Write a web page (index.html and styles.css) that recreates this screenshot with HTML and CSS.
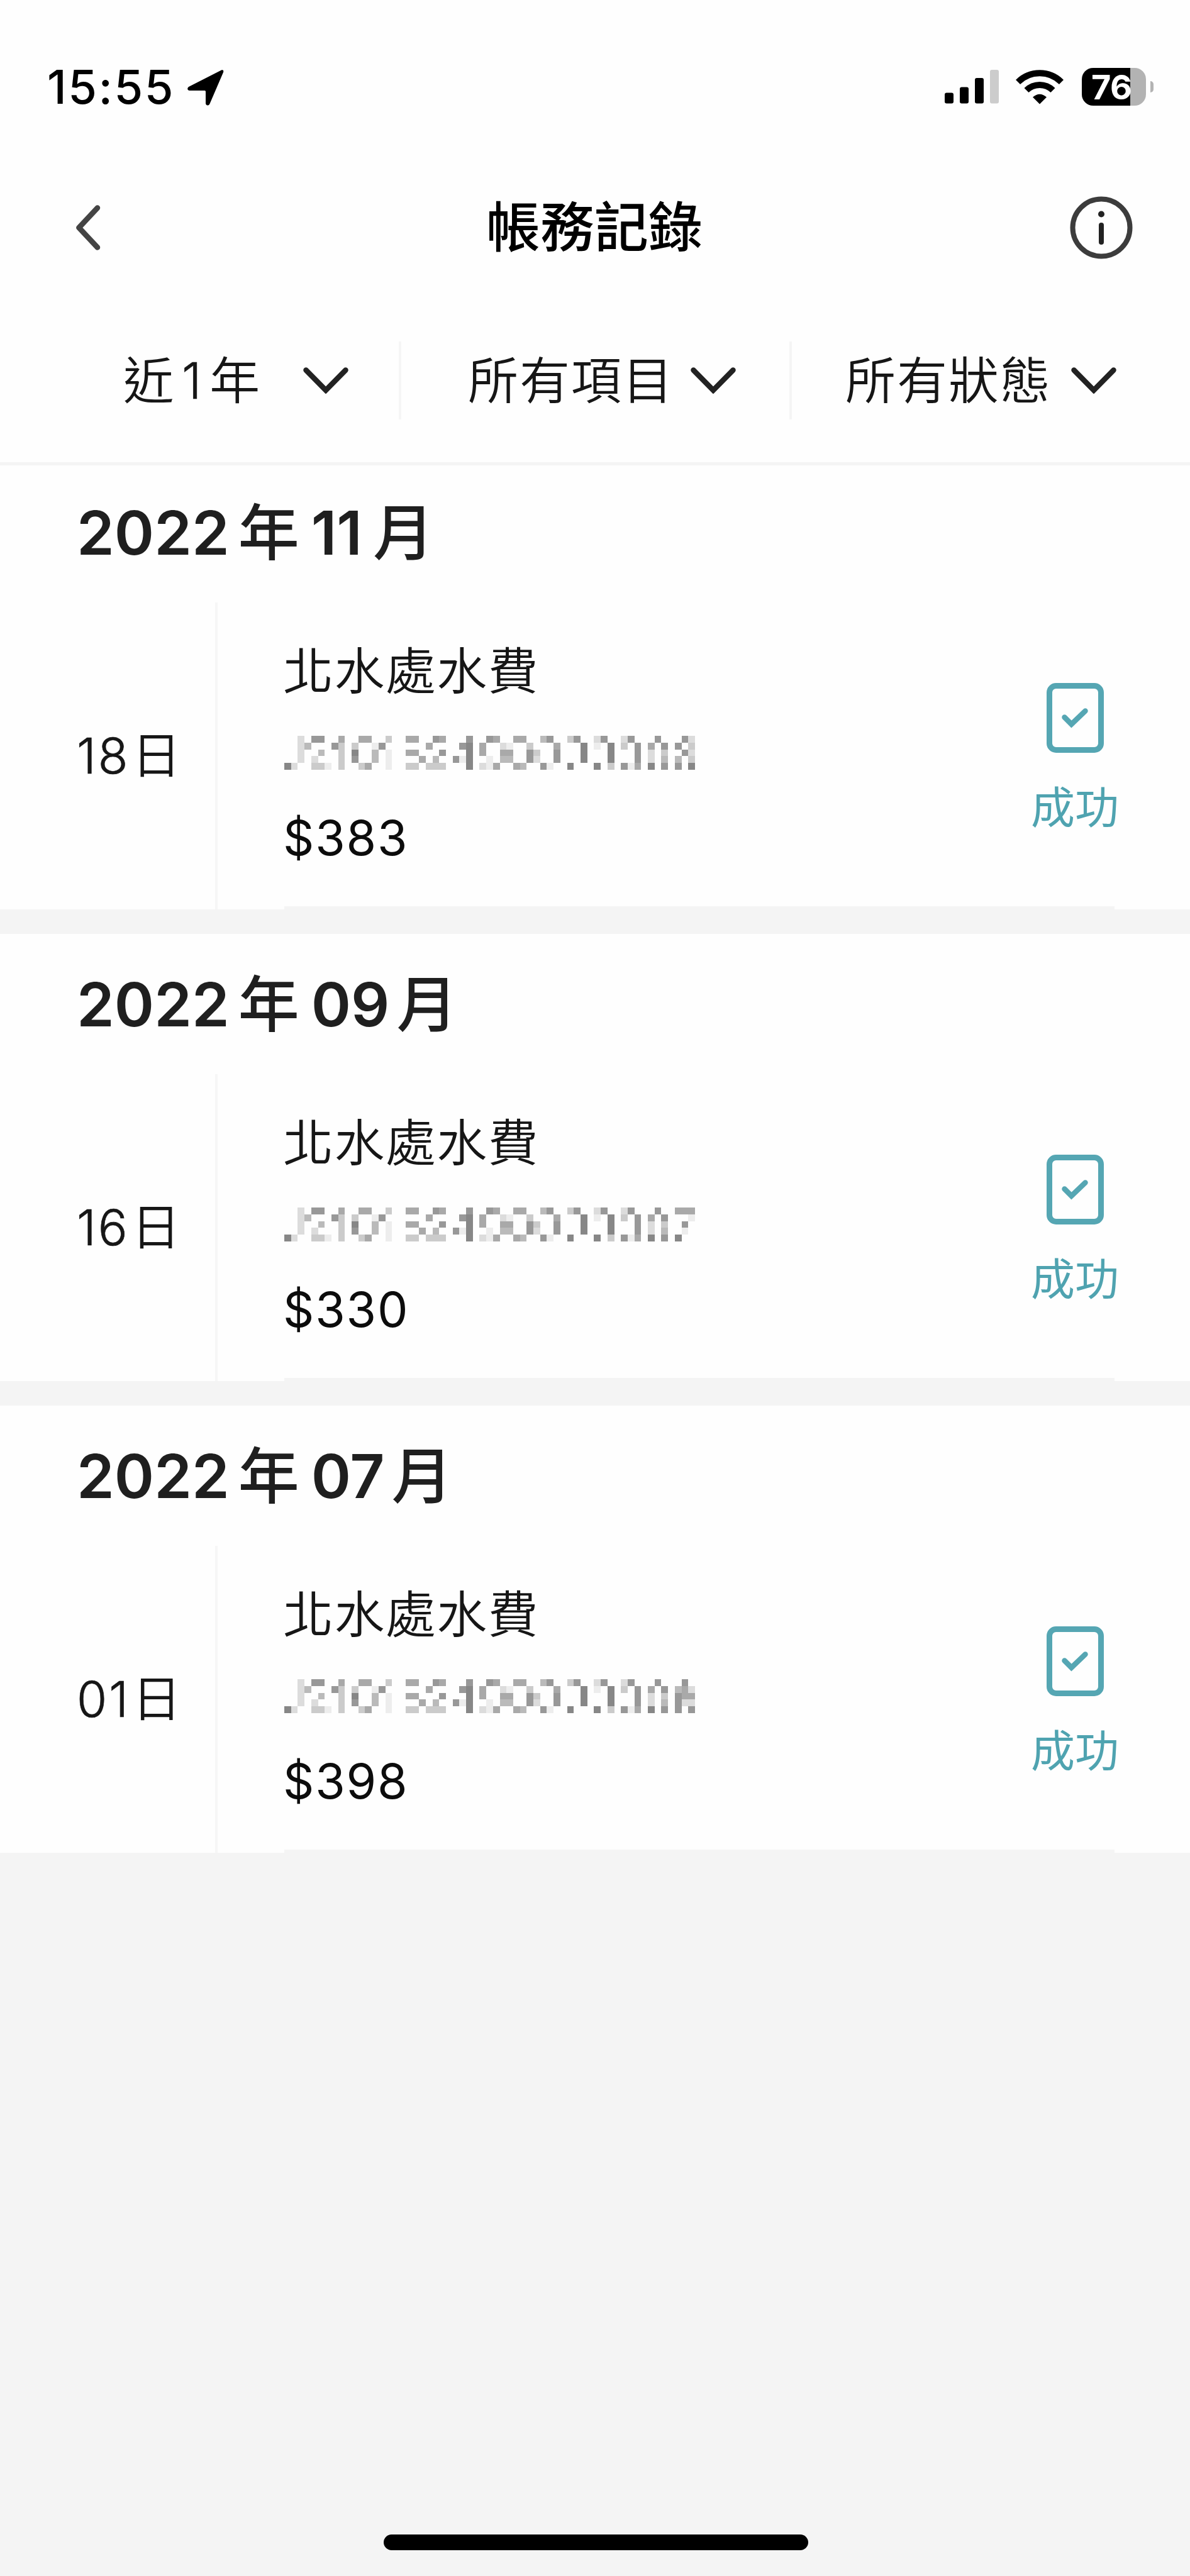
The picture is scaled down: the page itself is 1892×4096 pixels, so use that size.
FILE: index.html
```html
<!DOCTYPE html>
<html lang="zh-Hant">
<head>
<meta charset="utf-8">
<title>帳務記錄</title>
<link rel="stylesheet" href="styles.css">
</head>
<body>
<svg class="defs" aria-hidden="true">
  <symbol id="chevron-down" viewBox="0 0 72 42"><path d="M4.500 4.500 36 36.500 67.500 4.500" fill="none" stroke="#222" stroke-width="8.500" stroke-linecap="round"/></symbol>
  <symbol id="receipt-ok" viewBox="0 0 91 111">
    <rect x="4.500" y="4.500" width="82" height="102" rx="10.500" fill="none" stroke="#55a6b3" stroke-width="9"/>
    <path d="M28.500 54.500 39.500 65.500 61.500 44.500" fill="none" stroke="#55a6b3" stroke-width="8.500" stroke-linecap="round"/>
  </symbol>
</svg>
<div class="screen">
  <header class="top">
    <div class="status-bar">
      <div class="clock">
        <span class="time">15:55</span>
        <svg class="locate" viewBox="0 0 58 58"><path d="M54 1.500 3 27.500C-1.500 30 0 34 3.500 34H27.500Q29 34 29 35.500V54C29 58 33.500 59 35.500 55L57 5C58 2 56.500.500 54 1.500Z"/></svg>
      </div>
      <div class="indicators">
        <svg class="signal" viewBox="0 0 86 54"><rect y="36.500" width="14" height="17" rx="3"/><rect x="24" y="27.500" width="14" height="26" rx="3"/><rect x="48" y="13" width="14" height="40.500" rx="3"/><rect x="72" width="14" height="53.500" rx="3" fill="#ccc"/></svg>
        <svg class="wifi" viewBox="0 0 76 56"><g fill="none" stroke="#000" stroke-width="10"><path d="M3.500 20.500A49 49 0 0 1 72.500 20.500"/><path d="M17 33.500A30 30 0 0 1 59 33.500"/></g><path d="M38 55.500 27 44.500Q38 35 49 44.500Z"/></svg>
        <div class="battery"><span class="level">76</span></div>
        <i class="nub"></i>
      </div>
    </div>
    <nav class="nav">
      <svg class="back" viewBox="0 0 40 72"><path d="M35 4.500 5.500 36 35 67.500" fill="none" stroke="#444" stroke-width="8.500" stroke-linecap="round" stroke-linejoin="round"/></svg>
      <h1 class="title">帳務記錄</h1>
      <svg class="info" viewBox="0 0 100 100"><circle cx="50" cy="50" r="45.500" fill="none" stroke="#3c3c3c" stroke-width="8"/><circle cx="50" cy="28.500" r="5" fill="#222"/><path d="M50 46V73" stroke="#222" stroke-width="8" stroke-linecap="round"/></svg>
    </nav>
    <div class="filters">
      <div class="filter filter-range"><span>近<b>1</b>年</span><svg class="chev"><use href="#chevron-down"/></svg></div>
      <div class="filter filter-item"><span>所有項目</span><svg class="chev"><use href="#chevron-down"/></svg></div>
      <div class="filter filter-state"><span>所有狀態</span><svg class="chev"><use href="#chevron-down"/></svg></div>
    </div>
  </header>
  <main class="list">
    <section class="card">
      <h2 class="month ones">2022<span class="year">年</span>11<span class="mon">月</span></h2>
      <div class="entry">
        <div class="day">18<span>日</span></div>
        <div class="detail"><div class="name">北水處水費</div><svg class="masked" viewBox="0 0 61 5" preserveAspectRatio="none" data-tail="8"></svg><div class="amount">$383</div></div>
        <div class="state"><svg class="receipt"><use href="#receipt-ok"/></svg><span>成功</span></div>
      </div>
    </section>
    <section class="card">
      <h2 class="month">2022<span class="year">年</span>09<span class="mon">月</span></h2>
      <div class="entry">
        <div class="day">16<span>日</span></div>
        <div class="detail"><div class="name">北水處水費</div><svg class="masked" viewBox="0 0 61 5" preserveAspectRatio="none" data-tail="7"></svg><div class="amount">$330</div></div>
        <div class="state"><svg class="receipt"><use href="#receipt-ok"/></svg><span>成功</span></div>
      </div>
    </section>
    <section class="card">
      <h2 class="month">2022<span class="year">年</span>07<span class="mon">月</span></h2>
      <div class="entry">
        <div class="day">01<span>日</span></div>
        <div class="detail"><div class="name">北水處水費</div><svg class="masked" viewBox="0 0 61 5" preserveAspectRatio="none" data-tail="6"></svg><div class="amount">$398</div></div>
        <div class="state"><svg class="receipt"><use href="#receipt-ok"/></svg><span>成功</span></div>
      </div>
    </section>
  </main>
  <footer class="home"><i></i></footer>
</div>
<script src="mask.js"></script>
</body>
</html>
```
FILE: styles.css
```css
* { box-sizing: border-box; }
body { margin: 0; background: #f4f4f4; }
svg { display: block; flex: none; }
.defs { display: none; }
.screen {
  width: 1892px;
  height: 4096px;
  display: flex;
  flex-direction: column;
  overflow: hidden;
  color: #161616;
  font-family: Inter, "Noto Sans CJK TC", sans-serif;
}
.top { height: 735px; background: #fefefe; }

.status-bar {
  height: 275px;
  padding: 0 58px 0 75px;
  display: flex;
  justify-content: space-between;
  align-items: center;
  color: #000;
}
.clock { display: flex; align-items: center; }
.time { width: 223px; font-size: 74px; font-weight: 500; line-height: 80px; letter-spacing: 2.500px; }
.locate { width: 58px; height: 58px; margin-top: 2px; }
.indicators { display: flex; align-items: center; }
.signal { width: 86px; height: 54px; }
.wifi { width: 76px; height: 56px; margin-left: 27px; }
.battery {
  width: 102px;
  height: 60px;
  margin-left: 29px;
  padding-left: 15px;
  border-radius: 18px;
  background: linear-gradient(90deg, #000 77px, #b3b3b3 77px);
}
.level { font-size: 54px; line-height: 62px; font-weight: 700; color: #fff; letter-spacing: -.5px; }
.nub { width: 5px; height: 18px; margin-left: 7px; border-radius: 0 5px 5px 0; background: #b3b3b3; }

.nav {
  height: 174px;
  padding: 0 91px 0 120px;
  display: grid;
  grid-template-columns: 100px 1fr 100px;
  align-items: center;
}
.back { width: 40px; height: 72px; }
.title { margin: 0; padding-right: 31px; text-align: center; font-size: 86px; font-weight: 500; line-height: 100px; color: #000; }
.info { width: 100px; height: 100px; }

.filters { height: 286px; padding-top: 94px; display: flex; }
.filter {
  height: 124px;
  display: flex;
  align-items: center;
  justify-content: space-between;
  font-size: 80px;
  font-weight: 350;
  line-height: 100px;
  letter-spacing: 1.900px;
  white-space: nowrap;
}
.filter b { font-weight: 300; margin: 0 11px; -webkit-text-stroke: .7px; }
.filter + .filter { border-left: 4px solid #f5f5f5; }
.filter-range { width: 634px; padding: 0 80px 0 196px; }
.filter-item { width: 621px; padding: 0 85px 0 106px; }
.filter-state { width: 637px; padding: 0 117px 0 85px; }
.chev { width: 72px; height: 42px; }

.list { border-top: 5px solid #f4f4f4; }
.card { height: 711px; margin-bottom: 39px; background: #fefefe; }
.card:first-child { height: 706px; }
.card:first-child .month { height: 218px; padding-bottom: 5px; }
.card:last-child { margin-bottom: 0; }
.month {
  height: 223px;
  margin: 0;
  padding-left: 122px;
  display: flex;
  align-items: center;
  font-size: 96px;
  font-weight: 600;
  line-height: 120px;
  color: #1f1f1f;
}
.month span { font-size: 97px; font-weight: 500; }
.year { margin: 0 19px 0 14px; }
.mon { margin-left: 11px; }
.ones .mon { margin-left: 17px; }

.entry { height: 488px; display: grid; grid-template-columns: 342px 1fr 366px; }
.day {
  padding-left: 122px;
  display: flex;
  align-items: center;
  font-size: 78px;
  font-weight: 300;
  line-height: 100px;
  letter-spacing: 3px;
  -webkit-text-stroke: .7px;
}
.day span { margin-left: 3px; font-weight: 350; -webkit-text-stroke: 0; }
.detail {
  position: relative;
  border-left: 4px solid #f6f6f6;
  padding: 59px 0 0 104px;
}
.detail::after {
  content: "";
  position: absolute;
  left: 106px;
  bottom: 0;
  width: 1320px;
  height: 5px;
  background: #f4f4f4;
}
.name { height: 100px; font-size: 80px; font-weight: 350; line-height: 100px; letter-spacing: 1.400px; }
.masked { width: 653px; height: 54px; margin: 53px 0 0 2px; shape-rendering: crispEdges; }
.amount { margin-top: 58px; font-size: 77px; font-weight: 400; line-height: 100px; letter-spacing: 1.800px; color: #0c0c0c; }
.state { display: flex; flex-direction: column; align-items: center; padding-top: 128px; color: #4fa3b0; }
.receipt { width: 91px; height: 111px; }
.state span { margin-top: 38px; font-size: 70px; font-weight: 400; line-height: 100px; }

.home { margin-top: auto; height: 66px; display: flex; justify-content: center; }
.home i { width: 675px; height: 25px; margin-left: 3px; border-radius: 13px; background: #000; }
```
FILE: mask.js
```js
// Pixelated account numbers: "column:darkness" cells, one string per row.
const head = [
  "2:2 4:6 5:6 8:5 11:5 12:5 15:3 18:5 19:5 22:6 23:5 27:6 30:6 31:5 34:5 35:5 38:4 39:6 42:3 43:6 46:2 47:6 50:2 51:6 55:6",
  "2:2 3:4 7:6 8:3 10:3 13:1 14:6 21:5 26:6 27:7 29:5 32:2 33:1 36:3 40:5 44:7 46:1 48:7 50:3 52:6 54:5 56:6",
  "2:2 5:4 8:3 10:7 13:4 15:1 18:5 19:5 23:6 27:7 29:5 32:5 33:5 36:6 37:3 40:6 44:7 48:7 52:6 54:2 56:3",
  "2:2 4:2 8:3 10:6 13:4 15:1 20:5 22:4 25:6 26:1 27:7 30:1 32:4 33:4 36:6 37:2 40:6 44:7 48:7 52:6 54:2 56:4",
  "0:7 1:2 4:3 5:3 6:1 8:3 11:3 12:5 15:1 18:3 19:3 21:3 22:3 23:3 27:7 29:2 30:1 31:5 34:5 35:4 38:6 39:1 42:7 46:7 48:3 50:6 51:1 52:5 54:7 56:6"
];
const tails = {
  8: ["59:6 60:2", "58:6 60:3", "59:6 60:2", "58:4 60:3", "58:6 60:7"],
  7: ["58:5 59:5 60:5", "60:1", "59:6", "59:1", "58:7"],
  6: ["59:6", "58:4 59:5 60:2", "58:6 59:5 60:5", "58:6 59:2 60:2", "58:6 60:6"]
};
document.querySelectorAll(".masked").forEach(svg => {
  head.forEach((row, y) => {
    (row + " " + tails[svg.dataset.tail][y]).split(" ").forEach(cell => {
      const [x, level] = cell.split(":").map(Number);
      const rect = document.createElementNS("http://www.w3.org/2000/svg", "rect");
      const tone = 254 - level * 17;
      rect.setAttribute("x", x);
      rect.setAttribute("y", y);
      rect.setAttribute("width", 1);
      rect.setAttribute("height", 1);
      rect.setAttribute("fill", `rgb(${tone},${tone},${tone})`);
      svg.appendChild(rect);
    });
  });
});
```
